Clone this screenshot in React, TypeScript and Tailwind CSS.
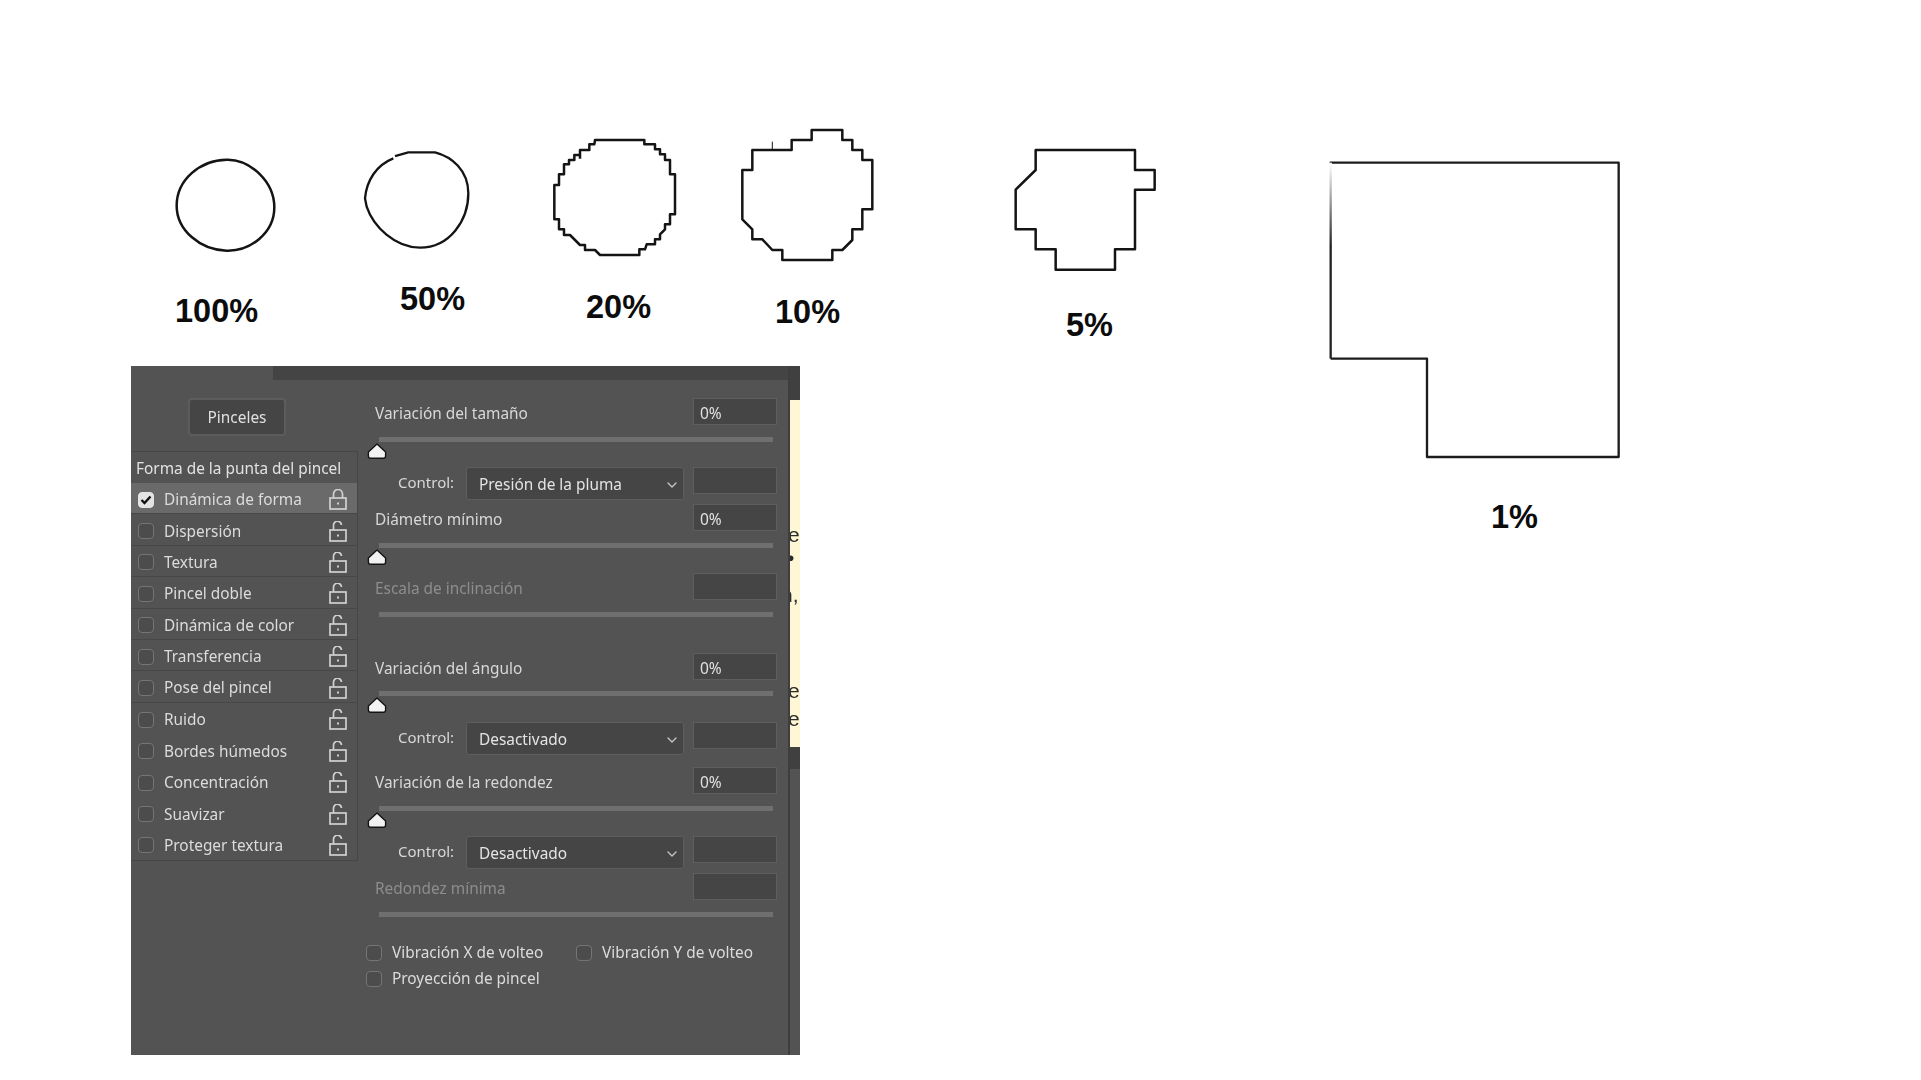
import React from 'react';
import { ChevronDown } from 'lucide-react';

const FONT = "font-['Noto_Sans',sans-serif]";

const BRUSH_OPTIONS = [
  { name: 'Dinámica de forma', checked: true, line: true },
  { name: 'Dispersión', line: true },
  { name: 'Textura', line: true },
  { name: 'Pincel doble', line: true },
  { name: 'Dinámica de color', line: true },
  { name: 'Transferencia', line: true },
  { name: 'Pose del pincel', line: true },
  { name: 'Ruido' },
  { name: 'Bordes húmedos' },
  { name: 'Concentración' },
  { name: 'Suavizar' },
  { name: 'Proteger textura' },
];

const Lock: React.FC<{ closed?: boolean }> = ({ closed }) => (
  <svg width="18" height="21" viewBox="0 0 18 21" fill="none" stroke="#d0d0d0" strokeWidth="1.7">
    <rect x="1" y="9" width="16" height="11" />
    <path d={closed ? 'M4.5 9V5a4.5 4.5 0 0 1 9 0v4' : 'M4.5 9V4.5a4 4 0 0 1 8-.5'} />
    <rect x="8" y="13.5" width="2" height="2" fill="#d0d0d0" stroke="none" />
  </svg>
);

const Check: React.FC<{ checked?: boolean }> = ({ checked }) => (
  <span
    className={`w-4 h-4 shrink-0 rounded-[4px] border-[1.5px] flex items-center justify-center ${
      checked ? 'bg-[#e4e4e4] border-[#e4e4e4]' : 'bg-[#4c4c4c] border-[#757575]'
    }`}
  >
    {checked && (
      <svg width="12" height="10" viewBox="0 0 12 10" fill="none" stroke="#111" strokeWidth="2.4">
        <path d="M1.5 5l3 3 6-6.5" />
      </svg>
    )}
  </span>
);

const Field: React.FC<{ value?: string; className?: string }> = ({ value, className = '' }) => (
  <div className={`w-[84px] h-[27px] shrink-0 bg-[#454545] border border-[#5e5e5e] pl-[6px] text-[15.5px] leading-[28px] text-[#e0e0e0] ${className}`}>
    {value}
  </div>
);

const Slider: React.FC<{ thumb?: boolean; className?: string }> = ({ thumb, className = '' }) => (
  <div className={className}>
    <div className="ml-[4px] w-[394px] h-[5px] bg-[#6f6f6f]" />
    {thumb && (
      <svg className="-ml-[8px] mt-[1px]" width="20" height="16" viewBox="0 0 20 16">
        <path d="M10 1L18.6 9V13Q18.6 15.2 16.5 15.2H3.5Q1.4 15.2 1.4 13V9z" fill="#f2f2f2" stroke="#141414" strokeWidth="1.4" strokeLinejoin="round" />
      </svg>
    )}
  </div>
);

const LabelRow: React.FC<{ label: string; value?: string; dim?: boolean; className?: string }> = ({ label, value, dim, className = '' }) => (
  <div className={`flex items-center justify-between h-[27px] ${className}`}>
    <span className={`pt-[4px] text-[15.4px] ${dim ? 'text-[#8d8d8d]' : 'text-[#d8d8d8]'}`}>{label}</span>
    <Field value={value} />
  </div>
);

const ControlRow: React.FC<{ value: string; className?: string }> = ({ value, className = '' }) => (
  <div className={`flex items-start h-[33px] ${className}`}>
    <span className="ml-[23px] w-[68px] text-[15px] leading-[31px] text-[#d8d8d8]">Control:</span>
    <div className="w-[218px] h-[33px] flex items-center justify-between bg-[#454545] border border-[#5e5e5e] rounded-[3px] pl-[12px] pr-[3px] text-[15.4px] text-[#e4e4e4]">
      <span className="pt-[2px]">{value}</span>
      <ChevronDown size={16} color="#c4c4c4" className="mt-[2px]" />
    </div>
    <Field className="ml-[9px]" />
  </div>
);

const Option: React.FC<{ label: string; className?: string }> = ({ label, className = '' }) => (
  <label className={`flex items-center gap-[10px] h-4 text-[15.4px] text-[#dcdcdc] ${className}`}>
    <Check />
    {label}
  </label>
);

// the little outlined brush tips, coordinates taken from the enlarged crops (1 unit = 1/3 px)
const Tip: React.FC<{ left: number; top: number; w: number; h: number; children: React.ReactNode; stroke?: number }> = ({ left, top, w, h, children, stroke = 7.5 }) => (
  <svg
    className="absolute"
    style={{ left, top }}
    width={w / 3}
    height={h / 3}
    viewBox={`0 0 ${w} ${h}`}
    fill="none"
    stroke="#141414"
    strokeWidth={stroke}
    strokeLinejoin="round"
  >
    {children}
  </svg>
);

const Label: React.FC<{ left: number; top: number; children: React.ReactNode }> = ({ left, top, children }) => (
  <span
    className="absolute font-['Liberation_Sans',sans-serif] font-bold text-[32.5px] leading-none text-[#0c0c0c]"
    style={{ left, top }}
  >
    {children}
  </span>
);

// bits of the document behind the panel, cut off by the panel's edge
const Clipped: React.FC<{ top: number; left?: number; children: React.ReactNode }> = ({ top, left = -2, children }) => (
  <span
    className="absolute font-['Liberation_Sans',sans-serif] text-[21px] leading-none text-[#2a2a2a]"
    style={{ top, left }}
  >
    {children}
  </span>
);

const App: React.FC = () => (
  <div className={`relative w-[1921px] h-[1080px] bg-white overflow-hidden pt-[366px] pl-[131px] ${FONT}`}>
    <Tip left={150} top={110} w={500} h={450}>
      <path d="M230 149C300 147 373 215 373 292C373 370 300 424 230 422C150 420 80 360 80 287C80 210 150 150 230 149Z" />
    </Tip>
    <Tip left={150} top={110} w={1000} h={450} stroke={7}>
      <path d="M735 138L775 127H855C905 140 955 180 955 250C955 330 900 413 810 413C735 413 670 350 650 290L645 265C650 210 680 165 730 145" />
    </Tip>
    <Tip left={540} top={110} w={450} h={480}>
      <path d="M165 90H313V103H345V118H360V133H375V150H390V193H405V313H390V343H375V358L360 373V388H345V403H320L315 418H298V435H180L165 420H135V405H120L90 375H72V358H57V328H43V225H57V193H72V163H87V150H103V135H120V120H148V103H163Z M120 120V146" />
    </Tip>
    <Tip left={540} top={110} w={1040} h={480}>
      <path d="M637 120H755V90H815V60H907V90H937V120H967V150H997V298H967V358H937V390L907 420H877V450H727V420H697L667 388H637V358L607 328V180H637Z" />
      <path d="M697 95V120" strokeWidth="3" />
    </Tip>
    <Tip left={990} top={130} w={520} h={440}>
      <path d="M137 60H435V120H494V179H435V358H375V419H197V358H137V298H77V179L137 120Z" />
    </Tip>
    <svg className="absolute left-[1310px] top-[140px]" width="330" height="340" viewBox="0 0 990 1020" fill="none" strokeWidth="7">
      <defs>
        <linearGradient id="fade" gradientUnits="userSpaceOnUse" x1="0" y1="70" x2="0" y2="320">
          <stop offset="0" stopColor="#fff" />
          <stop offset="1" stopColor="#222" />
        </linearGradient>
      </defs>
      <path d="M59 68H926V951H351V656H62" stroke="#1c1c1c" strokeLinejoin="round" />
      <path d="M62 68V656" stroke="url(#fade)" />
    </svg>

    <Label left={175} top={295}>100%</Label>
    <Label left={400} top={283}>50%</Label>
    <Label left={586} top={291}>20%</Label>
    <Label left={775} top={296}>10%</Label>
    <Label left={1066} top={309}>5%</Label>
    <Label left={1491} top={501}>1%</Label>

    {/* brush settings panel */}
    <div className="flex w-[669px] h-[689px] bg-[#535353] [filter:blur(0.35px)]">
      <div className="w-[227px] shrink-0 flex flex-col">
        <div className="h-[14px]" />
        <div className="ml-[57px] mt-[18px] w-[98px] h-[38px] pt-[2px] flex items-center justify-center bg-[#454545] border-2 border-[#5c5c5c] rounded-[4px] text-[15.4px] text-[#e0e0e0]">
          Pinceles
        </div>
        <div className="mt-[15px] border-t border-r border-b border-[#464646]">
          <div className="h-[31px] pl-[5px] pt-[3px] flex items-center text-[15.4px] text-[#e2e2e2]">Forma de la punta del pincel</div>
          {BRUSH_OPTIONS.map((o) => (
            <div
              key={o.name}
              className={`h-[31.4px] pl-[7px] pr-[10px] pt-[3px] flex items-center text-[15.4px] text-[#dcdcdc] ${
                o.checked ? 'bg-[#6a6a6a]' : ''
              } ${o.line ? 'border-b border-[#474747]' : ''}`}
            >
              <Check checked={o.checked} />
              <span className="ml-[10px] flex-1">{o.name}</span>
              <Lock closed={o.checked} />
            </div>
          ))}
        </div>
      </div>

      <div className="flex-1 relative">
        <div className="absolute top-0 left-[-85px] right-0 h-[14px] bg-[#444444]" />
        <div className="pl-[17px] pr-[11px] pt-[32px]">
          <LabelRow label="Variación del tamaño" value="0%" />
          <Slider thumb className="mt-[12px]" />
          <ControlRow value="Presión de la pluma" className="mt-[8px]" />
          <LabelRow label="Diámetro mínimo" value="0%" className="mt-[4px]" />
          <Slider thumb className="mt-[12px]" />
          <LabelRow label="Escala de inclinación" dim className="mt-[8px]" />
          <Slider className="mt-[12px]" />
          <LabelRow label="Variación del ángulo" value="0%" className="mt-[36px]" />
          <Slider thumb className="mt-[11px]" />
          <ControlRow value="Desactivado" className="mt-[9px]" />
          <LabelRow label="Variación de la redondez" value="0%" className="mt-[12px]" />
          <Slider thumb className="mt-[12px]" />
          <ControlRow value="Desactivado" className="mt-[8px]" />
          <LabelRow label="Redondez mínima" dim className="mt-[4px]" />
          <Slider className="mt-[12px]" />
          <div className="mt-[28px] ml-[-9px] flex">
            <Option label="Vibración X de volteo" className="w-[210px]" />
            <Option label="Vibración Y de volteo" />
          </div>
          <Option label="Proyección de pincel" className="mt-[10px] ml-[-9px]" />
        </div>
      </div>

      <div className="w-[12px] shrink-0 border-l-2 border-[#3e3e3e] flex flex-col">
        <div className="h-[34px] bg-[#404040]" />
        <div className="relative h-[347px] bg-[#fff6d6] overflow-hidden">
          <Clipped top={124}>e</Clipped>
          <Clipped top={147} left={-3}>•</Clipped>
          <Clipped top={184} left={-9}>n,</Clipped>
          <Clipped top={280}>e</Clipped>
          <Clipped top={308}>e</Clipped>
        </div>
        <div className="h-[22px] bg-[#404040]" />
      </div>
    </div>
  </div>
);

export default App;
